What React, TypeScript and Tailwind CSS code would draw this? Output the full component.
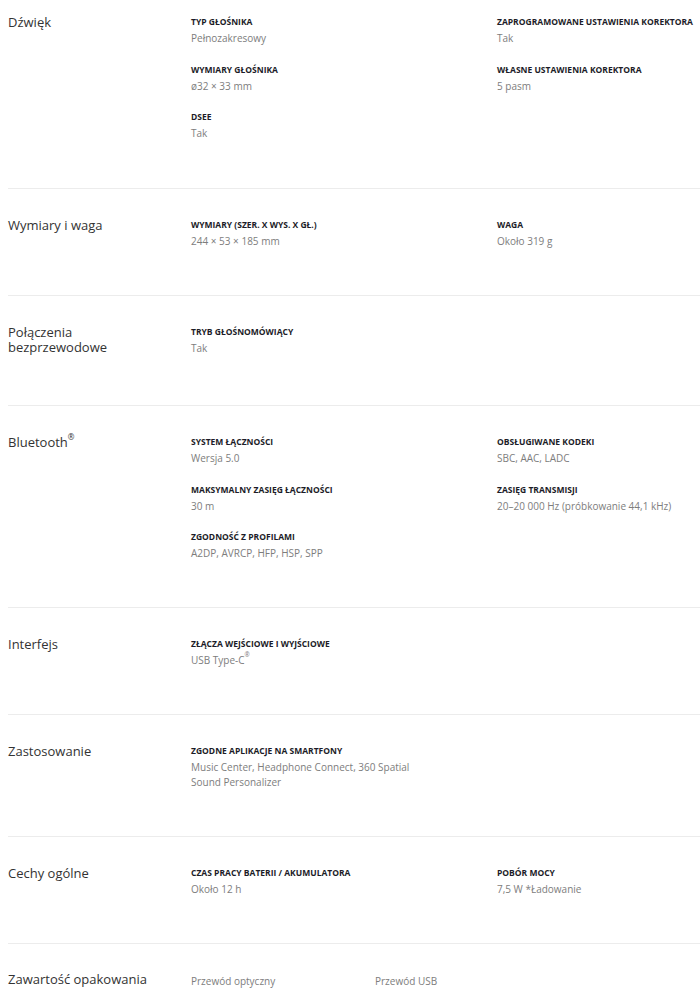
import type { ReactNode } from 'react';

type Spec = { label: string; value: ReactNode[] };

type Section = {
  title: ReactNode[];
  left: Spec[];
  right?: Spec[];
};

const Reg = () => <sup className="text-[0.62em] align-top relative top-[2px]">®</sup>;

const SECTIONS: Section[] = [
  {
    title: ['Dźwięk'],
    left: [
      { label: 'Typ głośnika', value: ['Pełnozakresowy'] },
      { label: 'Wymiary głośnika', value: ['ø32 × 33 mm'] },
      { label: 'DSEE', value: ['Tak'] },
    ],
    right: [
      { label: 'Zaprogramowane ustawienia korektora', value: ['Tak'] },
      { label: 'Własne ustawienia korektora', value: ['5 pasm'] },
    ],
  },
  {
    title: ['Wymiary i waga'],
    left: [{ label: 'Wymiary (szer. x wys. x gł.)', value: ['244 × 53 × 185 mm'] }],
    right: [{ label: 'Waga', value: ['Około 319 g'] }],
  },
  {
    title: ['Połączenia', 'bezprzewodowe'],
    left: [{ label: 'Tryb głośnomówiący', value: ['Tak'] }],
  },
  {
    title: [
      <>
        Bluetooth
        <Reg />
      </>,
    ],
    left: [
      { label: 'System łączności', value: ['Wersja 5.0'] },
      { label: 'Maksymalny zasięg łączności', value: ['30 m'] },
      { label: 'Zgodność z profilami', value: ['A2DP, AVRCP, HFP, HSP, SPP'] },
    ],
    right: [
      { label: 'Obsługiwane kodeki', value: ['SBC, AAC, LADC'] },
      { label: 'Zasięg transmisji', value: ['20–20 000 Hz (próbkowanie 44,1 kHz)'] },
    ],
  },
  {
    title: ['Interfejs'],
    left: [
      {
        label: 'Złącza wejściowe i wyjściowe',
        value: [
          <>
            USB Type-C
            <Reg />
          </>,
        ],
      },
    ],
  },
  {
    title: ['Zastosowanie'],
    left: [
      {
        label: 'Zgodne aplikacje na smartfony',
        value: ['Music Center, Headphone Connect, 360 Spatial', 'Sound Personalizer'],
      },
    ],
  },
  {
    title: ['Cechy ogólne'],
    left: [{ label: 'Czas pracy baterii / akumulatora', value: ['Około 12 h'] }],
    right: [{ label: 'Pobór mocy', value: ['7,5 W *Ładowanie'] }],
  },
];

const IN_BOX = ['Przewód optyczny', 'Przewód USB'];

function SpecList({ items }: { items: Spec[] }) {
  return (
    <div className="flex flex-col gap-[17.5px]">
      {items.map((s) => (
        <div key={s.label}>
          <p className="text-[8.5px] leading-[12px] font-bold uppercase text-[#1c1c28]">{s.label}</p>
          <p className="mt-[3px] text-[10px] leading-[15px] text-[#7d7d7d]">
            {s.value.map((v, i) => (
              <span key={i} className="block">
                {v}
              </span>
            ))}
          </p>
        </div>
      ))}
    </div>
  );
}

export default function App() {
  return (
    <div className="bg-white min-h-screen pl-2 font-['Open_Sans',sans-serif]">
      {SECTIONS.map((sec, i) => (
        <section
          key={i}
          className={`flex ${i === 0 ? 'pt-4 pb-[47px]' : 'pt-[30px] pb-[46px] border-t border-[#ececec]'}`}
        >
          {/* Section title */}
          <h3 className="w-[183px] shrink-0 text-[13px] leading-[15px] text-[#333] -mt-px pb-[4px]">
            {sec.title.map((t, j) => (
              <span key={j} className="block">
                {t}
              </span>
            ))}
          </h3>
          <div className="w-[306px] shrink-0">
            <SpecList items={sec.left} />
          </div>
          {sec.right && (
            <div className="flex-1">
              <SpecList items={sec.right} />
            </div>
          )}
        </section>
      ))}

      {/* In the box */}
      <section className="flex pt-[28px] pb-4 border-t border-[#ececec]">
        <h3 className="w-[183px] shrink-0 text-[13px] leading-[15px] text-[#333]">Zawartość opakowania</h3>
        <div className="flex">
          {IN_BOX.map((item) => (
            <p key={item} className="w-[184px] text-[10px] leading-[15px] text-[#7d7d7d] mt-[2px]">
              {item}
            </p>
          ))}
        </div>
      </section>
    </div>
  );
}
